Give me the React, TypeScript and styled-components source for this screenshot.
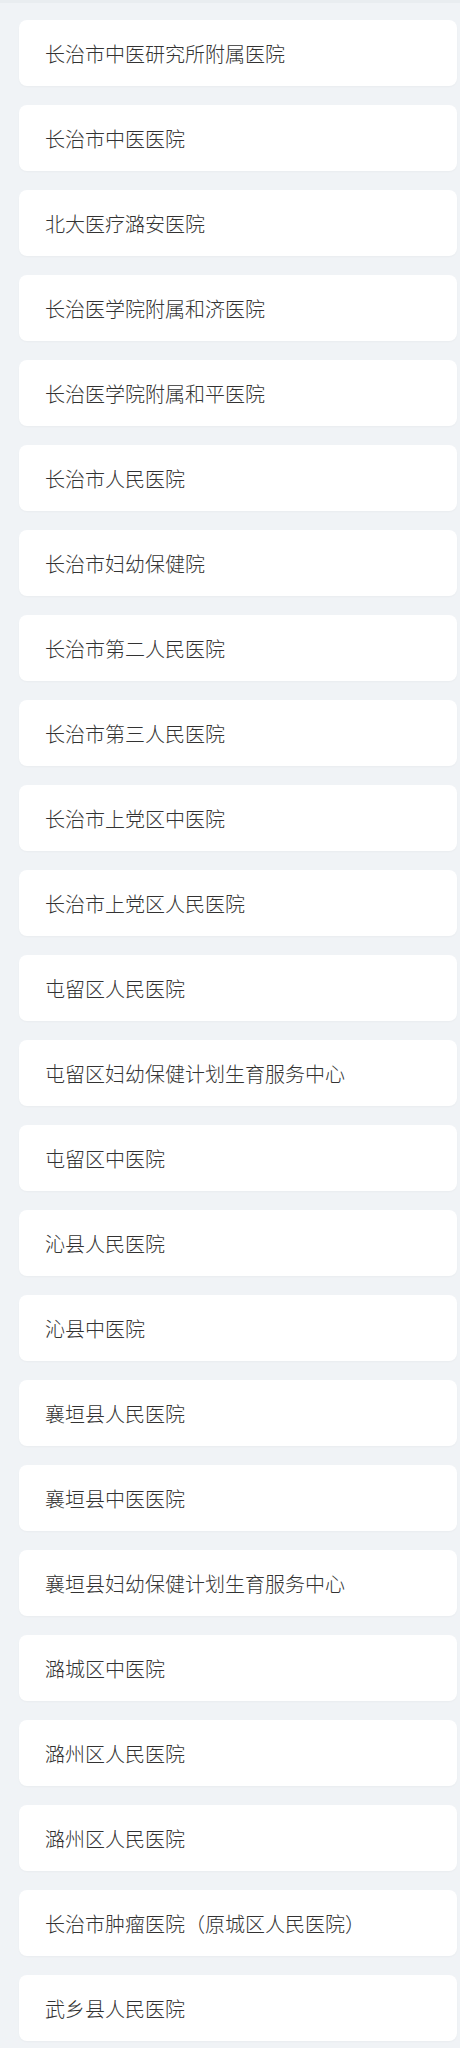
import React from "react";
import styled, { createGlobalStyle } from "styled-components";

const GlobalStyle = createGlobalStyle`
  html, body {
    margin: 0;
    padding: 0;
    background: #f0f3f6;
  }
  * { box-sizing: border-box; }
`;

const Page = styled.div`
  background: #f0f3f6;
  border-top: 3px solid #e9edf0;
  padding: 17px 3px 7px 19px;
  display: flex;
  flex-direction: column;
  gap: 19px;
  font-family: "Noto Sans CJK SC", "Noto Sans", sans-serif;
`;

const Card = styled.div`
  height: 66px;
  background: #ffffff;
  border-radius: 8px;
  display: flex;
  align-items: center;
  padding-left: 26px;
  font-size: 20px;
  font-weight: 300;
  color: #333333;
  box-shadow: 0 1px 2px rgba(0, 0, 0, 0.03);
`;

const hospitals = [
  "长治市中医研究所附属医院",
  "长治市中医医院",
  "北大医疗潞安医院",
  "长治医学院附属和济医院",
  "长治医学院附属和平医院",
  "长治市人民医院",
  "长治市妇幼保健院",
  "长治市第二人民医院",
  "长治市第三人民医院",
  "长治市上党区中医院",
  "长治市上党区人民医院",
  "屯留区人民医院",
  "屯留区妇幼保健计划生育服务中心",
  "屯留区中医院",
  "沁县人民医院",
  "沁县中医院",
  "襄垣县人民医院",
  "襄垣县中医医院",
  "襄垣县妇幼保健计划生育服务中心",
  "潞城区中医院",
  "潞州区人民医院",
  "潞州区人民医院",
  "长治市肿瘤医院（原城区人民医院）",
  "武乡县人民医院",
];

export default function App() {
  return (
    <>
      <GlobalStyle />
      <Page>
        {hospitals.map((h, i) => (
          <Card key={i}>{h}</Card>
        ))}
      </Page>
    </>
  );
}
